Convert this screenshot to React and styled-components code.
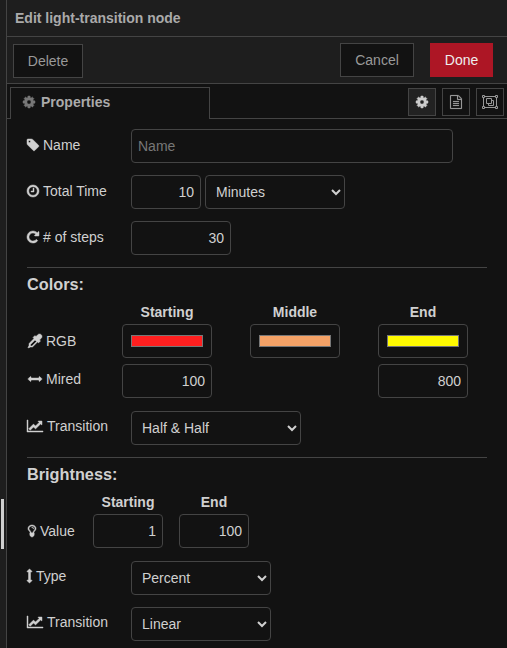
import React from "react";
import styled, { createGlobalStyle } from "styled-components";

const GlobalStyle = createGlobalStyle`
  *, *::before, *::after { box-sizing: border-box; }
  body {
    margin: 0;
    background: #121212;
    color: #d0d0d0;
    font: 14px/20px "Liberation Sans", Arial, sans-serif;
    overflow: hidden;
  }
`;

const Page = styled.div`
  display: flex;
  height: 648px;
  width: 507px;
`;

const Separator = styled.div`
  display: flex;
  align-items: center;
  width: 6px;
  flex: none;
  background: #1e1e1e;
  padding: 400px 0 0 1px;
`;

const Grip = styled.div`
  width: 3px;
  height: 50px;
  background: #d0d0d0;
`;

const Tray = styled.main`
  flex: 1;
  min-width: 0;
  border-left: 1px solid #444;
  background: #121212;
`;

const Header = styled.header`
  height: 37px;
  padding: 8px 8px 0;
  background: #1e1e1e;
  border-bottom: 1px solid #444;
  color: #aaa;
  font-weight: bold;
`;

const Toolbar = styled.div`
  display: flex;
  gap: 16px;
  height: 47px;
  padding: 6px 14px 0 6px;
  background: #1e1e1e;
  border-bottom: 1px solid #444;
`;

const Button = styled.button`
  height: 34px;
  width: ${(p) => p.$width}px;
  margin: ${(p) => (p.$first ? "1px auto 0 0" : "0")};
  padding: 0;
  font: inherit;
  color: ${(p) => (p.$primary ? "#eee" : "#999")};
  background: ${(p) => (p.$primary ? "#ad1625" : "#121212")};
  border: 1px solid ${(p) => (p.$primary ? "#ad1625" : "#444")};
`;

const TabBar = styled.div`
  display: flex;
  height: 35px;
  padding: 3px 3px 0;
  border-bottom: 1px solid #444;
`;

const Tab = styled.div`
  display: flex;
  align-items: center;
  gap: 6px;
  width: 200px;
  height: 32px;
  margin-right: auto;
  padding: 0 12px 3px;
  border: 1px solid #444;
  border-bottom: 0;
  background: #121212;
  color: #aaa;
  font-weight: bold;
  & > svg { color: #777; }
`;

const TabButtons = styled.div`
  display: flex;
  gap: 6px;
  padding-top: 1px;
`;

const TabButton = styled.button`
  display: grid;
  place-items: center;
  width: 28px;
  height: 28px;
  padding: 0;
  color: ${(p) => (p.$selected ? "#ccc" : "#999")};
  background: ${(p) => (p.$selected ? "#222" : "#121212")};
  border: 1px solid #444;
`;

const Form = styled.form`
  width: 480px;
  padding: 10px 0 0 20px;
`;

const Row = styled.div`
  display: flex;
  gap: 4px;
  height: 34px;
  margin-bottom: 12px;
`;

const Label = styled.label`
  display: flex;
  align-items: center;
  gap: ${(p) => p.$gap ?? 4}px;
  height: 20px;
  width: ${(p) => p.$width ?? 100}px;
  margin-top: ${(p) => p.$top ?? 6}px;
  padding-left: ${(p) => p.$indent ?? 0}px;
  white-space: nowrap;
`;

const Field = styled.input`
  height: 34px;
  width: ${(p) => p.$width}px;
  margin: 0;
  padding: ${(p) => (p.type === "color" ? "6px" : "4px 6px")};
  font: inherit;
  color: #d0d0d0;
  text-align: ${(p) => p.$align ?? "right"};
  background: #121212;
  border: 1px solid #444;
  border-radius: 4px;
  outline: none;
  &::placeholder { color: #777; opacity: 1; }
`;

const Select = styled.select`
  height: 34px;
  width: ${(p) => p.$width}px;
  margin: 0;
  padding: 4px 6px;
  font: inherit;
  color: #d0d0d0;
  background: #121212;
  border: 1px solid #444;
  border-radius: 4px;
  outline: none;
`;

const Section = styled.section`
  border-top: 1px solid #444;
`;

const SectionTitle = styled.h4`
  margin: 6px 0 8px;
  font-size: 16.3px;
  line-height: 20px;
`;

const ColorGrid = styled.div`
  display: grid;
  grid-template-columns: 57px 90px 90px 90px;
  grid-template-rows: 16px 34px 34px;
  column-gap: 38px;
  row-gap: 6px;
  margin-bottom: 13px;
`;

const BrightnessGrid = styled.div`
  display: grid;
  grid-template-columns: 50px 70px 70px;
  grid-template-rows: 22px 34px;
  column-gap: 16px;
  margin-bottom: 13px;
`;

const ColumnTitle = styled.div`
  text-align: center;
  font-weight: bold;
  line-height: 20px;
  align-self: start;
`;

const GEAR =
  "M1152 896q0-106-75-181t-181-75-181 75-75 181 75 181 181 75 181-75 75-181zm512-109v222q0 12-8 23t-20 13l-185 28q-19 54-39 91 35 50 107 138 10 12 10 25t-9 23q-27 37-99 108t-94 71q-12 0-26-9l-138-108q-44 23-91 38-16 136-29 186-7 28-36 28h-222q-14 0-24.5-8.5t-11.5-21.5l-28-184q-49-16-90-37l-141 107q-10 9-25 9-14 0-25-11-126-114-165-168-7-10-7-23 0-12 8-23 15-21 51-66.5t54-70.5q-27-50-41-99l-183-27q-13-2-21-12.5t-8-23.5v-222q0-12 8-23t19-13l186-28q14-46 39-92-40-57-107-138-10-12-10-24 0-10 9-23 26-36 98.5-107.5t94.5-71.5q13 0 26 10l138 107q44-23 91-38 16-136 29-186 7-28 36-28h222q14 0 24.5 8.5t11.5 21.5l28 184q49 16 90 37l142-107q9-9 24-9 13 0 25 10 129 119 165 170 7 8 7 22 0 12-8 23-15 21-51 66.5t-54 70.5q26 50 41 98l183 28q13 2 21 12.5t8 23.5z";

/* [viewBox x, viewBox width, path], all on a 1792-unit em */
const GLYPHS = {
  gear: [128, 1536, GEAR],
  tag: [128, 1536, "M576 448q0-53-37.5-90.5t-90.5-37.5-90.5 37.5-37.5 90.5 37.5 90.5 90.5 37.5 90.5-37.5 37.5-90.5zm1067 576q0 53-37 90l-491 492q-39 37-91 37-53 0-90-37l-715-716q-38-37-64.5-101t-26.5-117v-416q0-52 38-90t90-38h416q53 0 117 26.5t102 64.5l715 714q37 39 37 91z"],
  clock: [128, 1536, "M1024 544v448q0 14-9 23t-23 9h-320q-14 0-23-9t-9-23v-64q0-14 9-23t23-9h224v-352q0-14 9-23t23-9h64q14 0 23 9t9 23zm416 352q0-148-73-273t-198-198-273-73-273 73-198 198-73 273 73 273 198 198 273 73 273-73 198-198 73-273zm224 0q0 209-103 385.5t-279.5 279.5-385.5 103-385.5-103-279.5-279.5-103-385.5 103-385.5 279.5-279.5 385.5-103 385.5 103 279.5 279.5 103 385.5z"],
  repeat: [128, 1536, "M1664 256v448q0 26-19 45t-45 19h-448q-42 0-59-40-17-39 14-69l138-138q-148-137-349-137-104 0-198.5 40.5t-163.5 109.5-109.5 163.5-40.5 198.5 40.5 198.5 109.5 163.5 163.5 109.5 198.5 40.5q119 0 225-52t179-147q7-10 23-12 15 0 25 9l137 138q9 8 9.5 20.5t-7.5 22.5q-109 132-264 204.5t-327 72.5q-156 0-298-61t-245-164-164-245-61-298 61-298 164-245 245-164 298-61q147 0 284.5 55.5t244.5 156.5l130-129q29-31 70-14 39 17 39 59z"],
  file: [128, 1536, "M1596 380q28 28 48 76t20 88v1152q0 40-28 68t-68 28h-1344q-40 0-68-28t-28-68v-1600q0-40 28-68t68-28h896q40 0 88 20t76 48zm-444-244v376h376q-10-29-22-41l-313-313q-12-12-41-22zm384 1528v-1024h-416q-40 0-68-28t-28-68v-416h-768v1536h1280zm-1024-864q0-14 9-23t23-9h704q14 0 23 9t9 23v64q0 14-9 23t-23 9h-704q-14 0-23-9t-9-23v-64zm736 224q14 0 23 9t9 23v64q0 14-9 23t-23 9h-704q-14 0-23-9t-9-23v-64q0-14 9-23t23-9h704zm0 256q14 0 23 9t9 23v64q0 14-9 23t-23 9h-704q-14 0-23-9t-9-23v-64q0-14 9-23t23-9h704z"],
  chart: [0, 2048, "M2048 1536v128h-2048v-1536h128v1408h1920zm-128-1248v435q0 21-19.5 29.5t-35.5-7.5l-121-121-633 633q-10 10-23 10t-23-10l-233-233-416 416-192-192 585-585q10-10 23-10t23 10l233 233 464-464-121-121q-16-16-7.5-35.5t29.5-19.5h435q14 0 23 9t9 23z"],
  arrowsH: [0, 1792, "M1792 896q0 26-19 45l-256 256q-19 19-45 19t-45-19-19-45v-128h-1024v128q0 26-19 45t-45 19-45-19l-256-256q-19-19-19-45t19-45l256-256q19-19 45-19t45 19 19 45v128h1024v-128q0-26 19-45t45-19 45 19l256 256q19 19 19 45z"],
  arrowsV: [576, 640, "M1216 320q0 26-19 45t-45 19h-128v1024h128q26 0 45 19t19 45-19 45l-256 256q-19 19-45 19t-45-19l-256-256q-19-19-19-45t19-45 45-19h128v-1024h-128q-26 0-45-19t-19-45 19-45l256-256q19-19 45-19t45 19l256 256q19 19 19 45z"],
  bulb: [384, 1024, "M1120 576q0 13-9.5 22.5t-22.5 9.5-22.5-9.5-9.5-22.5q0-46-54-71t-106-25q-13 0-22.5-9.5t-9.5-22.5 9.5-22.5 22.5-9.5q50 0 99.5 16t87 54 37.5 90zm160 0q0-72-34.5-134t-90-101.5-123-62-136.5-22.5-136.5 22.5-123 62-90 101.5-34.5 134q0 101 68 180 10 11 30.5 33t30.5 33q128 153 141 298h228q13-145 141-298 10-11 30.5-33t30.5-33q68-79 68-180zm128 0q0 155-103 268-45 49-74.5 87t-59.5 95.5-34 107.5q47 28 47 82 0 37-25 64 25 27 25 64 0 52-45 81 13 23 13 47 0 46-31.5 71t-77.5 25q-20 44-60 70t-87 26-87-26-60-70q-46 0-77.5-25t-31.5-71q0-24 13-47-45-29-45-81 0-37 25-64-25-27-25-64 0-54 47-82-4-50-34-107.5t-59.5-95.5-74.5-87q-103-113-103-268 0-99 44.5-184.5t117-142 164-89 186.5-32.5 186.5 32.5 164 89 117 142 44.5 184.5z"],
  dropper: [0, 1792, "M1698 94q94 94 94 226.5t-94 225.5l-225 223 104 104q10 10 10 23t-10 23l-210 210q-10 10-23 10t-23-10l-105-105-603 603q-37 37-90 37h-203l-256 128-64-64 128-256v-203q0-53 37-90l603-603-105-105q-10-10-10-23t10-23l210-210q10-10 23-10t23 10l104 104 223-225q93-94 225.5-94t226.5 94zm-1186 1442l576-576-192-192-576 576v192h192z"],
};

const Svg = styled.svg`
  display: block;
  flex: none;
  overflow: visible;
`;

function Icon({ name, weight = 60 }) {
  const [x, w, d] = GLYPHS[name];
  return (
    <Svg
      width={(w / 1792) * 14}
      height="14"
      viewBox={`${x} 0 ${w} 1792`}
      fill="currentColor"
      stroke="currentColor"
      strokeWidth={weight}
      aria-hidden="true"
    >
      <path d={d} />
    </Svg>
  );
}

function GroupIcon() {
  return (
    <Svg width="16" height="14" viewBox="0 0 16 14" fill="none" stroke="currentColor" aria-hidden="true">
      <path d="M3 1.5h10M3 12.5h10M1.5 3v8M14.5 3v8" />
      <path d="M.5.5h2v2h-2zM13.5.5h2v2h-2zM.5 11.5h2v2h-2zM13.5 11.5h2v2h-2z" />
      <path d="M4.5 3.5h5v5h-5zM9.5 5.5h2v5h-5v-2" />
    </Svg>
  );
}

export default function App() {
  return (
    <>
      <GlobalStyle />
      <Page>
        <Separator><Grip /></Separator>
        <Tray>
          <Header>Edit light-transition node</Header>
          <Toolbar>
            <Button $width={70} $first>Delete</Button>
            <Button $width={74}>Cancel</Button>
            <Button $width={63} $primary>Done</Button>
          </Toolbar>
          <TabBar>
            <Tab><Icon name="gear" />Properties</Tab>
            <TabButtons>
              <TabButton $selected aria-label="Properties"><Icon name="gear" /></TabButton>
              <TabButton aria-label="Description"><Icon name="file" weight={20} /></TabButton>
              <TabButton aria-label="Appearance"><GroupIcon /></TabButton>
            </TabButtons>
          </TabBar>
          <Form>
            <Row>
              <Label><Icon name="tag" />Name</Label>
              <Field $width={322} $align="left" placeholder="Name" />
            </Row>
            <Row>
              <Label><Icon name="clock" />Total Time</Label>
              <Field $width={70} defaultValue="10" />
              <Select $width={140}><option>Minutes</option></Select>
            </Row>
            <Row>
              <Label><Icon name="repeat" /># of steps</Label>
              <Field $width={100} defaultValue="30" />
            </Row>
            <Section>
              <SectionTitle>Colors:</SectionTitle>
              <ColorGrid>
                <span />
                <ColumnTitle>Starting</ColumnTitle>
                <ColumnTitle>Middle</ColumnTitle>
                <ColumnTitle>End</ColumnTitle>
                <Label $width={57} $top={7} $indent={1}><Icon name="dropper" />RGB</Label>
                <Field type="color" $width={90} defaultValue="#ff1f1f" />
                <Field type="color" $width={90} defaultValue="#f4a267" />
                <Field type="color" $width={90} defaultValue="#fffa00" />
                <Label $width={57} $top={5} $indent={1}><Icon name="arrowsH" />Mired</Label>
                <Field $width={90} defaultValue="100" />
                <span />
                <Field $width={90} defaultValue="800" />
              </ColorGrid>
              <Row>
                <Label $top={5}><Icon name="chart" />Transition</Label>
                <Select $width={170}><option>Half &amp; Half</option></Select>
              </Row>
            </Section>
            <Section>
              <SectionTitle>Brightness:</SectionTitle>
              <BrightnessGrid>
                <span />
                <ColumnTitle>Starting</ColumnTitle>
                <ColumnTitle>End</ColumnTitle>
                <Label $width={50} $top={7} $indent={1}><Icon name="bulb" />Value</Label>
                <Field $width={70} defaultValue="1" />
                <Field $width={70} defaultValue="100" />
              </BrightnessGrid>
              <Row>
                <Label $top={5}><Icon name="arrowsV" />Type</Label>
                <Select $width={140}><option>Percent</option></Select>
              </Row>
              <Row>
                <Label $top={5}><Icon name="chart" />Transition</Label>
                <Select $width={140}><option>Linear</option></Select>
              </Row>
            </Section>
          </Form>
        </Tray>
      </Page>
    </>
  );
}
